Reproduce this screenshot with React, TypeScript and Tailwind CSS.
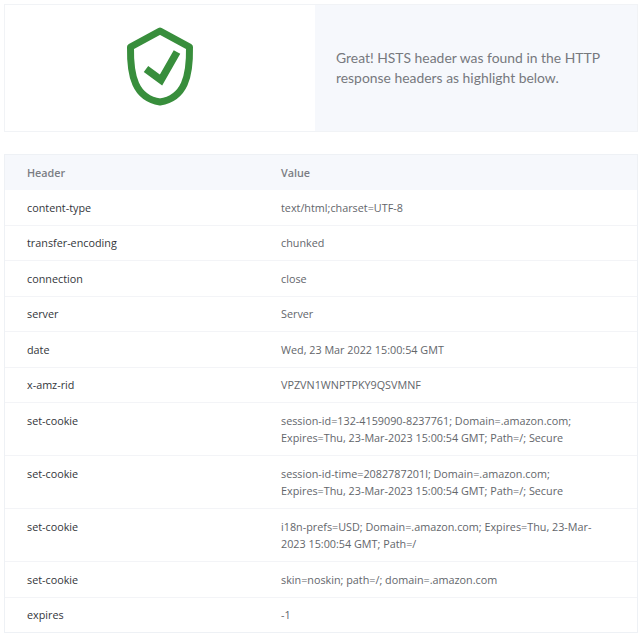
const rows: [string, string][] = [
  ['content-type', 'text/html;charset=UTF-8'],
  ['transfer-encoding', 'chunked'],
  ['connection', 'close'],
  ['server', 'Server'],
  ['date', 'Wed, 23 Mar 2022 15:00:54 GMT'],
  ['x-amz-rid', 'VPZVN1WNPTPKY9QSVMNF'],
  ['set-cookie', 'session-id=132-4159090-8237761; Domain=.amazon.com; Expires=Thu, 23-Mar-2023 15:00:54 GMT; Path=/; Secure'],
  ['set-cookie', 'session-id-time=2082787201l; Domain=.amazon.com; Expires=Thu, 23-Mar-2023 15:00:54 GMT; Path=/; Secure'],
  ['set-cookie', 'i18n-prefs=USD; Domain=.amazon.com; Expires=Thu, 23-Mar-2023 15:00:54 GMT; Path=/'],
  ['set-cookie', 'skin=noskin; path=/; domain=.amazon.com'],
  ['expires', '-1'],
]

function ShieldCheck() {
  return (
    <svg className="mb-[5px]" width="70" height="80" viewBox="0 0 70 80" fill="none">
      <path
        d="M35 5 L64.5 21 C65 50 60 72 35 76 C10 72 5 50 5.5 21 Z"
        stroke="#388e3c"
        strokeWidth="7"
        strokeLinejoin="round"
      />
      <path d="M21 43 L36 54 L52 26" stroke="#388e3c" strokeWidth="7.5" />
    </svg>
  )
}

export default function App() {
  return (
    <div className="min-h-[636px] bg-white px-1 pt-1 font-['Open_Sans',sans-serif]">
      {/* Result card */}
      <div className="flex h-[128px] w-[634px] border border-[#f1f3f6]">
        <div className="flex w-[310px] items-center justify-center">
          <ShieldCheck />
        </div>
        <div className="flex flex-1 items-center bg-[#f6f8fc] pl-[21px] pr-4">
          <p className="font-['Lato',sans-serif] text-[13.9px] leading-[20.5px] text-[#77797e]">
            Great! HSTS header was found in the HTTP response headers as highlight below.
          </p>
        </div>
      </div>

      {/* Headers table */}
      <div className="mt-[22px] w-[634px] border border-[#eef1f5]">
        <div className="grid h-[35.3px] grid-cols-[254px_1fr] items-center bg-[#f6f8fc] text-[10.8px] font-semibold text-[#7b7d83]">
          <div className="pl-[22px]">Header</div>
          <div className="pl-[22px]">Value</div>
        </div>
        {rows.map(([name, value], i) => (
          <div
            key={i}
            className="grid grid-cols-[254px_1fr] border-b border-[#f3f4f7] py-[8.5px] text-[10.8px] leading-[17.5px] last:border-b-0"
          >
            <div className="pl-[22px] font-medium text-[#33353a]">{name}</div>
            <div className="pl-[22px] pr-[30px] text-[#63666b]">{value}</div>
          </div>
        ))}
      </div>
    </div>
  )
}
